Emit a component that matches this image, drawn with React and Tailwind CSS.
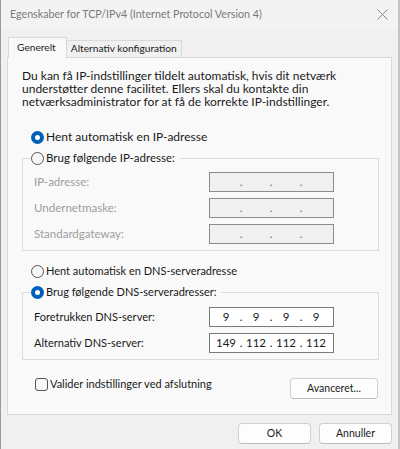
import React from 'react';

const font = { fontFamily: 'Lato, "Noto Sans", sans-serif' };

function Radio({ checked }) {
  return checked ? (
    <span className="w-[13px] h-[13px] rounded-full bg-[#005fb8] flex items-center justify-center shrink-0">
      <span className="w-[5px] h-[5px] rounded-full bg-white" />
    </span>
  ) : (
    <span className="w-[13px] h-[13px] rounded-full border border-[#555555] bg-[#f7f7f7] shrink-0" />
  );
}

function IpField({ parts, enabled }) {
  const segs = parts || ['', '', '', ''];
  return (
    <div
      className={`w-[125px] h-[20px] shrink-0 flex items-center pl-[4px] border text-[11.5px] ${
        enabled ? 'bg-white border-[#7a7a7a] text-[#1a1a1a]' : 'bg-[#f0f0f0] border-[#8c8c8c] text-[#6d6d6d]'
      }`}
    >
      {segs.map((s, i) => (
        <React.Fragment key={i}>
          <span className="w-[24px] text-center leading-none">{s}</span>
          {i < 3 && <span className="w-[6px] text-center leading-none">.</span>}
        </React.Fragment>
      ))}
    </div>
  );
}

function Row({ label, parts, enabled }) {
  return (
    <div className="flex items-center h-[20px]">
      <span className={`w-[186px] shrink-0 pl-[11px] ${enabled ? 'text-[#1a1a1a]' : 'text-[#9d9d9d]'}`}>{label}</span>
      <IpField parts={parts} enabled={enabled} />
    </div>
  );
}

function Button({ children, className = '' }) {
  return (
    <div
      className={`h-[21px] flex items-center justify-center rounded-[4px] border border-[#d0d0d0] border-b-[#bcbcbc] bg-[#fdfdfd] text-[#1a1a1a] text-[10.5px] ${className}`}
    >
      {children}
    </div>
  );
}

export default function App() {
  return (
    <div
      style={font}
      className="w-[400px] h-[449px] bg-[#f0f0f0] border-l border-[#9a9a9a] border-r-2 border-r-[#c4c4c4] flex flex-col text-[11px] text-[#1a1a1a] overflow-hidden"
    >
      <div className="h-[29px] bg-[#f3f3f3] flex items-center justify-between pl-[9px] pr-[10px] shrink-0">
        <span className="text-[#7a7a7a] text-[10.7px]">Egenskaber for TCP/IPv4 (Internet Protocol Version 4)</span>
        <svg width="11" height="11" viewBox="0 0 11 11">
          <path d="M0.5 0.5 L10.5 10.5 M10.5 0.5 L0.5 10.5" stroke="#8a8a8a" strokeWidth="1" />
        </svg>
      </div>

      <div className="pl-[6px] pr-[6px] pt-[8px] flex flex-col">
        <div className="flex items-end h-[20px] pl-[1px] text-[10.2px]">
          <div className="h-[21px] -mb-px z-10 pl-[8px] pr-[10px] flex items-center border border-b-0 border-[#d9d9d9] bg-[#f9f9f9]">
            Generelt
          </div>
          <div className="h-[17px] px-[4px] flex items-center border border-l-0 border-b-0 border-[#d9d9d9] bg-[#f0f0f0]">
            Alternativ konfiguration
          </div>
        </div>

        <div className="h-[358px] border border-[#d9d9d9] bg-[#f9f9f9] pl-[14px] pr-[12px] flex flex-col">
          <div className="mt-[11px] text-[12px] flex flex-col">
            <div className="h-[13px] leading-[13px]">Du kan få IP-indstillinger tildelt automatisk, hvis dit netværk</div>
            <div className="h-[13px] leading-[13px]">understøtter denne facilitet. Ellers skal du kontakte din</div>
            <div className="h-[13px] leading-[13px]">netværksadministrator for at få de korrekte IP-indstillinger.</div>
          </div>

          <div className="mt-[21px] h-[16px] flex items-center pl-[9px] gap-[2px] text-[12px]">
            <Radio checked />
            <span>Hent automatisk en IP-adresse</span>
          </div>

          <div className="mt-[13px] border border-[#dcdcdc] flex flex-col pb-[6px]">
            <div className="-mt-[9px] h-[16px] flex items-center self-start ml-[8px] pr-[5px] gap-[2px] bg-[#f9f9f9] text-[11.5px]">
              <Radio />
              <span>Brug følgende IP-adresse:</span>
            </div>
            <div className="mt-[6px] flex flex-col gap-[6px] text-[11.5px]">
              <Row label="IP-adresse:" />
              <Row label="Undernetmaske:" />
              <Row label="Standardgateway:" />
            </div>
          </div>

          <div className="mt-[12px] h-[16px] flex items-center pl-[9px] gap-[2px]">
            <Radio />
            <span>Hent automatisk en DNS-serveradresse</span>
          </div>

          <div className="mt-[13px] border border-[#dcdcdc] flex flex-col pb-[6px]">
            <div className="-mt-[9px] h-[16px] flex items-center self-start ml-[8px] pr-[5px] gap-[2px] bg-[#f9f9f9]">
              <Radio checked />
              <span>Brug følgende DNS-serveradresser:</span>
            </div>
            <div className="mt-[7px] flex flex-col gap-[6px]">
              <Row label="Foretrukken DNS-server:" parts={['9', '9', '9', '9']} enabled />
              <Row label="Alternativ DNS-server:" parts={['149', '112', '112', '112']} enabled />
            </div>
          </div>

          <div className="flex items-start justify-between">
            <div className="mt-[16px] h-[16px] flex items-center ml-[13px] gap-[2px]">
              <span className="w-[13px] h-[13px] rounded-[3px] border border-[#555555] bg-[#f7f7f7]" />
              <span>Valider indstillinger ved afslutning</span>
            </div>
            <Button className="mt-[18px] w-[88px] mr-[1px]">Avanceret...</Button>
          </div>
        </div>

        <div className="mt-[8px] flex justify-end gap-[8px]">
          <Button className="w-[73px]">OK</Button>
          <Button className="w-[73px]">Annuller</Button>
        </div>
      </div>
    </div>
  );
}
